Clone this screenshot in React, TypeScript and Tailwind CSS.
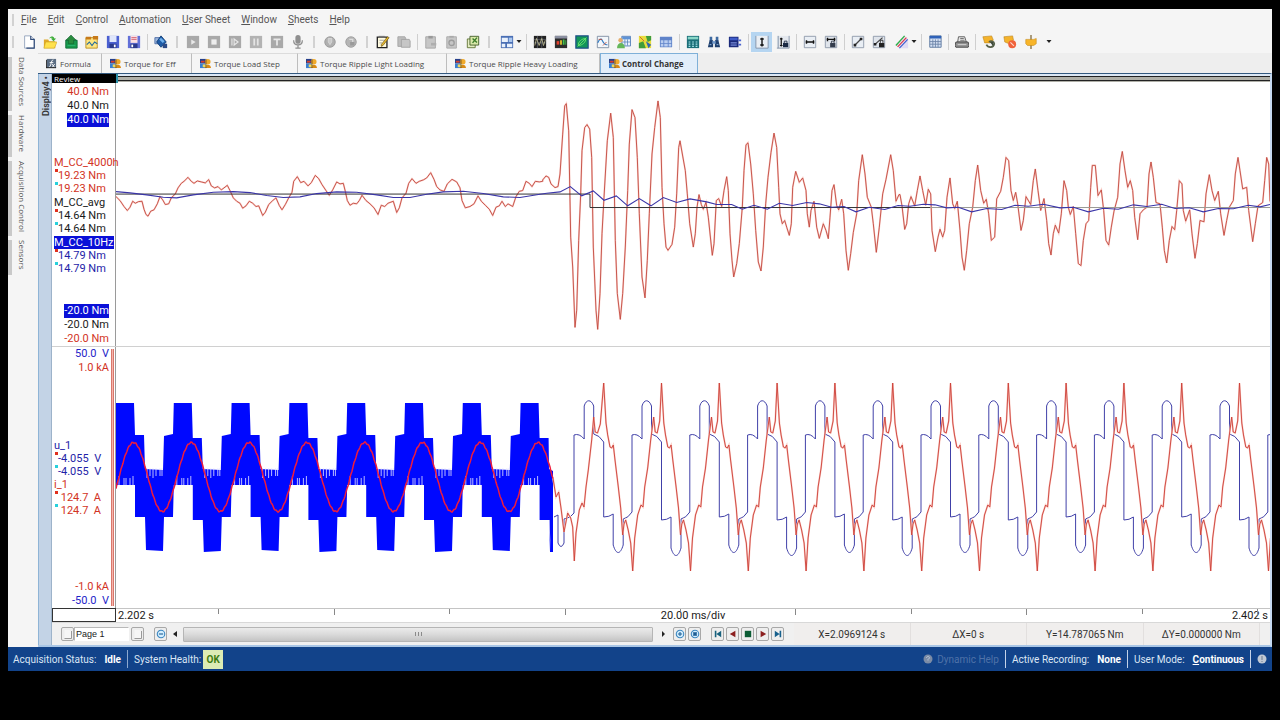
import React from "react";

type Point = [number, number];

/* ---------- Toolbar drawings, all on a 16 x 16 grid ---------- */

const glyphs: Record<string, React.ReactNode> = {
  newDoc: (
    <>
      <path d="M3 1h7l4 4v10H3z" fill="#fff" stroke="#8fa0ba" />
      <path d="M10 1v4h4v10H5" fill="none" stroke="#2f4a78" strokeWidth="1.300" />
    </>
  ),
  open: (
    <>
      <path d="M1 5h5l1 2h7v8H1z" fill="#e0a92a" />
      <path d="M3 8h13l-3 7H1z" fill="#ffe14d" stroke="#c9a21f" strokeWidth=".6" />
      <path d="M7 4c2-3 5-3 6 0h2l-3 3-3-3h2c-1-1-2-1-4 0z" fill="#3fae3a" />
    </>
  ),
  archive: (
    <>
      <path d="M2 6h13v9H2z" fill="#189a4c" stroke="#0c6b38" />
      <path d="M8 0l6 6h-3v4H5V6H2z" fill="#2a8b3e" stroke="#0b5a2e" strokeWidth=".6" />
      <path d="M4 12h9" stroke="#2db574" />
    </>
  ),
  picture: (
    <>
      <path d="M1 3h13v12H1z" fill="#ffe680" stroke="#b88a1c" />
      <path d="M1 2h6v3H1zM9 1h6v4H9z" fill="#c77a1a" />
      <path d="M2 11l3-3 3 4 3-4 3 2" fill="none" stroke="#2a6f9d" strokeWidth="1.3" />
    </>
  ),
  save: (
    <>
      <path d="M1 1h14v14H1z" fill="#4a5fd0" />
      <path d="M4 1h8v7H4z" fill="#dfe6fb" />
      <path d="M4 10h8v5H4z" fill="#2b3a8c" />
      <path d="M9 11h2v3H9z" fill="#fff" />
    </>
  ),
  saveAs: (
    <>
      <path d="M1 1h14v14H1z" fill="#6270d8" />
      <path d="M4 1h8v8H4z" fill="#fbdfe2" />
      <path d="M5 3h6M5 5h6" stroke="#d0566a" />
      <path d="M4 10h8v5H4z" fill="#2b3a8c" />
      <path d="M5 11h2v3H5z" fill="#fff" />
    </>
  ),
  cubes: (
    <>
      <path d="M1 3h8v7H1z" fill="#9db7dd" stroke="#4a6aa5" />
      <path d="M8 1l6 7-6 6-5-6z" fill="#1e5ca8" stroke="#0d3a75" />
      <path d="M8 3l4 4-2 2-4-4z" fill="#6fb0ec" />
      <path d="M10 10h5v5h-5z" fill="#2b4a86" />
    </>
  ),
  play: (
    <>
      <path d="M1 1h14v14H1z" fill="#a9a9a9" />
      <path d="M6 5l5 3-5 3z" fill="#e8e8e8" />
    </>
  ),
  stop: (
    <>
      <path d="M1 1h14v14H1z" fill="#a9a9a9" />
      <path d="M5 5h6v6H5z" fill="#eee" />
    </>
  ),
  step: (
    <>
      <path d="M1 1h14v14H1z" fill="#a9a9a9" />
      <path d="M4.500 4v8M7 4.500l4.500 3.500L7 11.500z" fill="none" stroke="#e8e8e8" strokeWidth="1.300" />
    </>
  ),
  pause: (
    <>
      <path d="M1 1h14v14H1z" fill="#b3b3b3" />
      <path d="M6 4v8M10 4v8" stroke="#e4e4e4" strokeWidth="2" />
    </>
  ),
  trigger: (
    <>
      <path d="M1 1h14v14H1z" fill="#a9a9a9" />
      <path d="M4 5h8M8 5v7" stroke="#e8e8e8" strokeWidth="2" />
    </>
  ),
  mic: (
    <>
      <rect x="5" y="0" width="6" height="10" rx="3" fill="#8f8f8f" />
      <path d="M3 6c0 7 10 7 10 0M8 11v4M5 15h6" fill="none" stroke="#8f8f8f" strokeWidth="1.400" />
    </>
  ),
  ringUp: (
    <>
      <circle cx="8" cy="8" r="6" fill="#b0b0b0" stroke="#989898" />
      <path d="M6 4h4v4l-2 3-2-3z" fill="#c9c9c9" stroke="#dedede" strokeWidth=".8" />
    </>
  ),
  ringLock: (
    <>
      <circle cx="8" cy="8" r="6" fill="#b5b5b5" stroke="#9c9c9c" />
      <path d="M7 8h5v4H7z" fill="#9a9a9a" />
      <path d="M6 5h4v3" stroke="#ddd" fill="none" strokeWidth="1.400" />
    </>
  ),
  note: (
    <>
      <path d="M1.500 2.500h11v12h-11z" fill="#fffbe0" stroke="#222" strokeWidth="1.500" />
      <path d="M3 1h7v2H3z" fill="#777" />
      <path d="M4 6h5M4 9h3" stroke="#999" />
      <path d="M15 3l-7 9-2 1 0-2 7-9z" fill="#e8b92c" stroke="#5a4510" strokeWidth=".7" />
    </>
  ),
  grayCopy: (
    <>
      <path d="M1 2h8l1 2v9H1z" fill="#bdbdbd" stroke="#a3a3a3" />
      <path d="M5 5h9l1 2v7H5z" fill="#c6c6c6" stroke="#a0a0a0" />
    </>
  ),
  grayPaste: (
    <>
      <path d="M2 2h11v13H2z" fill="#c6c6c6" stroke="#a3a3a3" />
      <path d="M5 1h5v3H5z" fill="#999" />
      <path d="M8 9h6v3H8z" fill="#aeaeae" />
    </>
  ),
  grayGear: (
    <>
      <path d="M2 2h11v13H2z" fill="#c6c6c6" stroke="#a8a8a8" />
      <path d="M5 1h5v2H5z" fill="#aaa" />
      <circle cx="7.500" cy="9" r="3" fill="none" stroke="#9c9c9c" strokeWidth="1.500" />
    </>
  ),
  sheetCopy: (
    <>
      <path d="M1.500 4.500h9v10h-9z" fill="#e5edc2" stroke="#5d7132" />
      <path d="M4.500 1.500h10v10h-10z" fill="#d8e8a8" stroke="#3f5a26" />
      <path d="M7.500 4l5 4.500M12.500 3l-5 6" stroke="#3b7c2a" strokeWidth="1.600" />
    </>
  ),
  layout: (
    <>
      <path d="M1 1h14v14H1z" fill="#4a6fb5" />
      <path d="M2 3h7v5H2zM2 10h4v4H2zM8 10h6v4H8z" fill="#e9f1fc" />
      <path d="M10 3h4v5h-4z" fill="#a9c6ee" />
    </>
  ),
  waveDark: (
    <>
      <path d="M1 1h14v14H1z" fill="#222" />
      <path d="M1 5h14M1 9h14M5 1v14M10 1v14" stroke="#6b7280" strokeWidth=".7" />
      <path d="M2 12l2-8 3 8 3-8 2 8 2-6" fill="none" stroke="#d7d3a2" strokeWidth=".8" />
    </>
  ),
  bars: (
    <>
      <path d="M1 1h14v14H1z" fill="#2c2c2c" />
      <path d="M1 1h14v3H1z" fill="#8a8fa0" />
      <path d="M3 7h3v4H3z" fill="#e3402d" />
      <path d="M7 6h2v5H7z" fill="#e8c92b" />
      <path d="M10 5h2v6h-2zM13 6h1v5h-1z" fill="#3fc24b" />
    </>
  ),
  xy: (
    <>
      <path d="M1 1h14v14H1z" fill="#12945a" stroke="#1c4f86" strokeWidth="1.400" />
      <path d="M4 12c-1-4 4-8 8-8 1 4-4 8-8 8zM3 13L13 3" fill="none" stroke="#6fe86f" />
    </>
  ),
  trend: (
    <>
      <path d="M1.500 1.500h13v13h-13z" fill="#f3f7fb" stroke="#7a8aa0" />
      <path d="M2 9c2-5 4-5 5-3s3 6 6 5" fill="none" stroke="#2f79c1" strokeWidth="1.300" />
      <path d="M3 5h4M8 12l4-4" stroke="#c0503a" />
    </>
  ),
  userTable: (
    <>
      <path d="M5.500 1.500h10v11h-10z" fill="#eaf2fb" stroke="#4a78b5" />
      <path d="M6 2h9v3H6z" fill="#5f93d6" />
      <path d="M9 5v7M12 5v7M6 8h9" stroke="#4a78b5" strokeWidth=".8" />
      <circle cx="4" cy="6" r="2.500" fill="#e3ad6c" />
      <path d="M0 15c0-8 9-8 9 0z" fill="#65b75a" />
    </>
  ),
  map: (
    <>
      <path d="M1 1h14v14H1z" fill="#e8dc3c" />
      <path d="M1 9l5-2 3 8H1zM9 1h6v5l-4 2z" fill="#3f9d3c" />
      <path d="M12 15l-3-8 6 4z" fill="#3167b3" />
      <path d="M2 2l5 5" stroke="#d4562c" />
    </>
  ),
  grid: (
    <>
      <path d="M1 2h14v12H1z" fill="#5f83c9" />
      <path d="M2 6h3v3H2zM6 6h4v3H6zM11 6h3v3h-3zM2 10h3v3H2zM6 10h4v3H6zM11 10h3v3h-3z" fill="#b9cdf0" />
    </>
  ),
  calc: (
    <>
      <path d="M1 1h14v14H1z" fill="#1b6e78" />
      <path d="M2 2h12v3H2z" fill="#88d6c7" />
      <path d="M3 8h2m2 0h2m2 0h2M3 10.500h2m2 0h2m2 0h2M3 13h2m2 0h2m2 0h2" stroke="#a4e3e8" strokeWidth="1.400" />
    </>
  ),
  binoculars: (
    <>
      <path d="M3 2h3v5H3zM10 2h3v5h-3z" fill="#3e6aa0" />
      <path d="M1 14l2-8h4v8zM9 14V6h4l2 8z" fill="#1f3f6d" />
      <path d="M6 7h4v3H6z" fill="#6f97c8" />
      <path d="M3 11h2M11 11h2" stroke="#9cc4ee" />
    </>
  ),
  device: (
    <>
      <path d="M1 2h11v12H1z" fill="#1b2a7a" />
      <path d="M2 3h9v3H2z" fill="#3f5cc8" />
      <path d="M3 9h7M3 11.500h7" stroke="#9fb4ff" />
      <path d="M12 5h3v2h-3zM12 10h3v2h-3z" fill="#4b64d0" />
    </>
  ),
  cursorV: (
    <>
      <path d="M1 1h14v14H1z" fill="#e9eef4" />
      <path d="M1 15V1M15 1v14H1" stroke="#7f8fa5" fill="none" />
      <path d="M8 3v10M6 4.500h4M6 11.500h4" stroke="#111" strokeWidth="1.600" />
    </>
  ),
  cursorVLock: (
    <>
      <path d="M1 1h14v14H1z" fill="#e4e8ee" />
      <path d="M2.500 1v14" stroke="#7f8fa5" />
      <path d="M6 3v10M4.500 4.500h3M4.500 12h3" stroke="#111" strokeWidth="1.400" />
      <path d="M8 9h6v5H8z" fill="#1b2a44" />
      <path d="M9.500 9V7h3v2" stroke="#1b2a44" fill="none" />
      <path d="M15 1v14H1" stroke="#7f8fa5" fill="none" />
    </>
  ),
  cursorH: (
    <>
      <path d="M1.500 1.500h13v13h-13z" fill="#e9eef4" stroke="#8b97a8" />
      <path d="M3 8h10M4 6v4M12 6v4" stroke="#111" strokeWidth="1.600" />
    </>
  ),
  cursorHLock: (
    <>
      <path d="M1.500 1.500h13v13h-13z" fill="#dfe4eb" stroke="#8b97a8" />
      <path d="M3 5h10M4 3v4M12 3v4" stroke="#111" strokeWidth="1.600" />
      <path d="M7 9h6v5H7z" fill="#333c4c" />
      <path d="M8.500 9V7h3v2" stroke="#333c4c" fill="none" />
    </>
  ),
  diagonal: (
    <>
      <path d="M1.500 1.500h13v13h-13z" fill="#e9eef4" stroke="#8b97a8" />
      <path d="M4 12l8-8" stroke="#444" strokeWidth="1.500" />
      <path d="M3 10h3v3H3zM10 3h3v3h-3z" fill="#222" />
    </>
  ),
  diagonalLock: (
    <>
      <path d="M1.500 1.500h13v13h-13z" fill="#dfe4eb" stroke="#8b97a8" />
      <path d="M3 11l9-8" stroke="#444" strokeWidth="1.500" />
      <path d="M2 9h3v3H2zM8 9h6v5H8z" fill="#222" />
      <path d="M9.500 9V6h3v3" stroke="#222" fill="none" />
    </>
  ),
  ruler: (
    <>
      <path d="M9 5h6v10H5z" fill="#e0dcf3" />
      <path d="M1 12L11 1l4 3L5 15z" fill="#f2dff0" />
      <path d="M1 12L11 1" stroke="#2fae4b" strokeWidth="1.600" />
      <path d="M3 13.500L13 3" stroke="#d23b4d" strokeWidth="1.400" />
      <path d="M5 15l9.500-10" stroke="#3c5fd0" strokeWidth="1.400" />
    </>
  ),
  tableBlue: (
    <>
      <path d="M2 1h13v13H2z" fill="#d5e1f3" stroke="#56729c" />
      <path d="M2 1h13v3H2z" fill="#2f62b8" />
      <path d="M5.500 5v9M8.500 5v9M11.500 5v9M2 7.500h13M2 10.500h13" stroke="#6b83a8" />
    </>
  ),
  printer: (
    <>
      <path d="M4 2h7l2 6H3z" fill="#e6e6e6" stroke="#555" />
      <path d="M1 8h14l1 4-1 2H1L0 12z" fill="#8f8f8f" stroke="#444" />
      <path d="M3 11h10" stroke="#ddd" />
      <path d="M6 4h4M6 6h5" stroke="#666" />
    </>
  ),
  tagCycle: (
    <>
      <path d="M1 2l10-1 2 5-4 3H3z" fill="#f4b32c" stroke="#b77d12" strokeWidth=".6" />
      <path d="M5 11c2 4 8 4 9-1 0-3-4-4-6-2" fill="none" stroke="#56604a" strokeWidth="2" />
      <path d="M9 8h4v5z" fill="#3e4a3c" />
    </>
  ),
  tagStop: (
    <>
      <path d="M1 2l10-1 1 5-5 4-5-2z" fill="#f4b32c" stroke="#b77d12" strokeWidth=".6" />
      <circle cx="10.500" cy="10.500" r="4.500" fill="#f0623c" />
      <path d="M8.500 8.500l4 4" stroke="#ffd9cb" strokeWidth="1.300" />
    </>
  ),
  tagPin: (
    <>
      <path d="M8 0v16" stroke="#7a6230" strokeWidth="1.400" />
      <path d="M2 5h9l3-1v6l-3 2H4l-2-2z" fill="#f8b52a" stroke="#c08512" strokeWidth=".6" />
    </>
  ),
};

function Glyph({ name }: { name: string }) {
  return (
    <svg viewBox="0 0 16 16" className="h-3.5 w-3.5 shrink-0" aria-hidden="true">
      {glyphs[name]}
    </svg>
  );
}

function Caret() {
  return (
    <svg viewBox="0 0 6 4" className="h-1 w-1.5 shrink-0" aria-hidden="true">
      <path d="M.5 0h5L3 3z" fill="#222" />
    </svg>
  );
}

/* "|" is a divider, ":" the grip of the next bar, "+" marks a drop-down, "*" a pressed button */
const toolbar: [string, string][] = [
  [":", ""], ["newDoc", "New"], ["open", "Open"], ["archive", "Archive"], ["picture", "Load layout"], ["save", "Save"], ["saveAs", "Save as"],
  ["|", ""], ["cubes", "Components"],
  [":", ""], ["play", "Start"], ["stop", "Stop"], ["step", "Single"], ["pause", "Pause"], ["trigger", "Trigger"], ["mic", "Voice mark"],
  [":", ""], ["ringUp", "Arm"], ["ringLock", "Lock"],
  [":", ""], ["note", "Edit notes"], ["grayCopy", "Copy"],
  ["|", ""], ["grayPaste", "Paste"], ["grayGear", "Paste special"], ["sheetCopy", "Copy to sheet"],
  [":", ""], ["layout+", "Layout"],
  ["|", ""], ["waveDark", "Waveform"], ["bars", "Meters"], ["xy", "XY view"], ["trend", "Trend"], ["userTable", "User table"], ["map", "Map"], ["grid", "Grid"],
  ["|", ""], ["calc", "Formula sheet"], ["binoculars", "Find"], ["device", "Device"],
  ["|", ""], ["cursorV*", "Vertical cursor"], ["cursorVLock", "Lock vertical cursor"],
  ["|", ""], ["cursorH", "Horizontal cursor"], ["cursorHLock", "Lock horizontal cursor"],
  ["|", ""], ["diagonal", "Slope cursor"], ["diagonalLock", "Lock slope cursor"], ["ruler+", "Measure"],
  ["|", ""], ["tableBlue", "Cursor table"],
  ["|", ""], ["printer", "Print"],
  ["|", ""], ["tagCycle", "Cycle marks"], ["tagStop", "Remove mark"], ["tagPin", "Add mark"],
];

function Toolbar() {
  return (
    <div className="-ml-px flex h-6 items-center" role="toolbar" aria-label="Main toolbar">
      {toolbar.map(([key, label], i) => {
        if (key === "|") return <span key={i} className="flex h-4 w-1.5 shrink-0 justify-center"><span className="w-px bg-[#cfcfcf]" /></span>;
        if (key === ":") return <span key={i} className="flex h-3 w-[11px] shrink-0 justify-center"><span className="w-0.5 bg-[#d2d2d2]" /></span>;
        const drop = key.endsWith("+");
        const pressed = key.endsWith("*");
        const cls = drop
          ? "flex h-5 w-[29px] shrink-0 items-center gap-0.5 pl-1.5"
          : pressed
            ? "flex h-5 w-[21px] shrink-0 items-center justify-center bg-[#b5d5f1]"
            : "flex h-5 w-[21px] shrink-0 items-center justify-center";
        return (
          <button key={i} type="button" aria-label={label} className={cls}>
            <Glyph name={key.replace(/[+*]/, "")} />
            {drop && <Caret />}
          </button>
        );
      })}
      <button type="button" aria-label="Toolbar options" className="flex h-5 w-4 items-center justify-center">
        <Caret />
      </button>
    </div>
  );
}

/* ---------- Sheet tabs ---------- */

function SheetIcon() {
  return (
    <svg viewBox="0 0 12 12" className="h-[11px] w-[11px] shrink-0" aria-hidden="true">
      <path d="M0 1h6v5H0z" fill="#27408b" />
      <path d="M0 6h6v5H0z" fill="#3b7fd0" />
      <path d="M1 3h4v2H1z" fill="#d7402c" />
      <circle cx="8.500" cy="4" r="3" fill="#f0a92a" />
      <path d="M5 11c0-5 7-5 7 0z" fill="#d98a16" />
      <path d="M3 7h4v3H3z" fill="#f4d65a" />
      <path d="M6.500 1v10" stroke="#3a2a12" strokeWidth=".7" />
    </svg>
  );
}

function FormulaIcon() {
  return (
    <svg viewBox="0 0 12 12" className="h-[11px] w-[11px] shrink-0" aria-hidden="true">
      <path d="M1 1h10v10H1z" fill="#5a6c82" />
      <path d="M3 10c3 0 2-8 5-8M4 5h4M6.500 6.500l3 4m0-4l-3 4" stroke="#fff" fill="none" />
      <path d="M.5 11V2M0 10.500h11" stroke="#222" />
    </svg>
  );
}

const tabs = [
  { label: "Formula", width: "w-[64px]" },
  { label: "Torque for Eff", width: "w-[90px]" },
  { label: "Torque Load Step", width: "w-[106px]" },
  { label: "Torque Ripple Light Loading", width: "w-[149px]" },
  { label: "Torque Ripple Heavy Loading", width: "w-[153px]" },
];

/* ---------- Trace data ---------- */

/* Samples are stored in thirds of a chart unit, relative to the segment's origin. */
function segment(x0: number, y0: number, flat: number[]): Point[] {
  const out: Point[] = [];
  for (let i = 0; i < flat.length; i += 2) out.push([x0 + flat[i] / 3, y0 + flat[i + 1] / 3]);
  return out;
}

const path = (pts: Point[]) => pts.map(([x, y], i) => `${i ? "L" : "M"}${x.toFixed(1)} ${y.toFixed(1)}`).join("");

const torque4000: Point[] = [
  ...segment(110, 150, [
    18, 138, 30, 150, 42, 168, 52, 180, 60, 170, 68, 152, 76, 158, 86, 153, 96, 152, 102, 176, 108, 192, 114, 197, 122, 182, 132, 178, 142, 160,
    150, 138, 158, 148, 166, 162, 176, 160, 184, 142, 196, 130, 204, 112, 214, 98, 222, 92, 234, 80, 244, 92, 252, 98, 262, 91, 274, 94, 286, 97,
    296, 87, 304, 106, 314, 112, 324, 108, 334, 118, 342, 112, 352, 104, 360, 120, 370, 142, 380, 152, 390, 158, 398, 173, 408, 166, 418, 152,
    428, 158, 438, 168, 446, 166, 458, 195, 466, 185, 476, 162, 488, 150, 498, 142, 508, 165, 516, 178, 526, 162, 536, 142, 546, 125, 551, 92,
    562, 78, 572, 96, 582, 92, 594, 106, 604, 96, 616, 74, 626, 84, 636, 102, 648, 120, 658, 134, 668, 118, 680, 94, 690, 100, 700, 98, 706, 122,
    712, 150, 720, 164, 730, 158, 740, 160, 748, 150, 756, 134, 768, 150, 780, 160, 792, 172, 804, 192, 814, 164, 824, 168, 834, 158, 850, 152,
    860, 186, 868, 172, 876, 142, 888, 128, 896, 98, 906, 84, 918, 98, 928, 92, 940, 88, 950, 82, 962, 66, 972, 86, 980, 108, 990, 118, 1002, 122,
    1012, 100, 1026, 86, 1040, 94, 1050, 112, 1056, 150, 1066, 172, 1080, 168, 1092, 160, 1104, 136, 1114, 152, 1126, 164, 1138, 176, 1148, 195,
    1158, 170, 1168, 166, 1176, 152, 1186, 168, 1194, 160, 1208, 168, 1218, 138, 1228, 122, 1238, 120, 1248, 92, 1258, 98, 1266, 108, 1276, 92,
    1288, 94, 1298, 92,
  ]),
  ...segment(540, 80, [
    8, 298, 18, 286, 26, 290, 33, 310, 45, 321, 54, 318, 60, 280, 68, 160, 74, 75, 79, 68, 86, 150, 92, 470, 98, 560, 105, 742, 110, 690, 116, 480,
    122, 340, 126, 210, 134, 140, 141, 131, 149, 145, 155, 230, 160, 500, 168, 690, 173, 748, 180, 640, 186, 460, 192, 350, 202, 180, 212, 97,
    220, 170, 226, 480, 232, 640, 241, 718, 248, 640, 256, 500, 263, 330, 268, 190, 276, 86, 285, 110, 292, 230, 298, 400, 306, 590, 315, 653,
    322, 540, 328, 400, 336, 220, 344, 140, 354, 60, 361, 110, 366, 320, 372, 430, 378, 500, 384, 510, 396, 492, 404, 440, 410, 340, 416, 200,
    420, 180, 428, 226, 436, 270, 442, 340, 449, 430, 460, 500, 466, 460, 471, 380, 477, 342, 484, 372, 490, 386, 498, 365, 505, 410, 517, 525,
    522, 490, 529, 360, 536, 354, 545, 378, 552, 330, 560, 288, 565, 330, 570, 460, 576, 540, 581, 590, 590, 550, 598, 490, 607, 380, 612, 270,
    618, 192, 624, 186, 632, 250, 640, 340, 647, 450, 655, 545, 663, 572, 670, 500, 677, 370, 684, 290, 693, 215, 702, 157, 710, 200, 716, 320,
    720, 400, 727, 430, 734, 420, 740, 440, 748, 465, 754, 430, 758, 320, 767, 272, 778, 305, 788, 292, 798, 330, 802, 400, 808, 440, 813, 390,
    822, 362, 830, 440, 838, 474, 850, 430, 858, 450, 865, 475, 870, 410, 876, 330, 882, 312, 890, 375, 896, 388, 905, 356, 911, 400, 918, 510,
    925, 570, 932, 520, 940, 456, 950, 400, 956, 300, 967, 222, 975, 280, 982, 350, 994, 380, 1000, 430, 1009, 516, 1018, 440, 1028, 340,
    1038, 296, 1052, 222, 1060, 270, 1068, 362, 1077, 342,
  ]),
  ...segment(900, 80, [
    0, 342, 6, 376, 14, 447, 20, 430, 26, 370, 33, 348, 44, 376, 52, 330, 60, 286, 68, 330, 77, 374, 85, 326, 92, 340, 96, 450, 106, 514, 114, 470,
    120, 446, 128, 470, 134, 450, 141, 350, 150, 292, 158, 370, 164, 384, 172, 362, 180, 450, 186, 530, 193, 570, 200, 510, 208, 430, 218, 380,
    226, 300, 233, 253, 242, 330, 251, 368, 259, 356, 266, 400, 274, 480, 284, 470, 290, 355, 302, 332, 310, 290, 318, 230, 326, 240, 333, 330,
    340, 360, 347, 335, 353, 370, 363, 450, 370, 420, 378, 348, 392, 372, 400, 300, 406, 265, 414, 330, 422, 390, 432, 354, 440, 420, 446, 490,
    453, 524, 460, 460, 466, 434, 476, 458, 484, 400, 492, 300, 500, 330, 505, 380, 511, 402, 520, 378, 527, 460, 535, 550, 543, 556, 550, 480,
    558, 430, 566, 420, 572, 320, 577, 254, 586, 254, 594, 345, 604, 328, 611, 390, 618, 480, 626, 494, 634, 440, 642, 392, 653, 350, 660, 250,
    667, 212, 675, 270, 683, 320, 691, 300, 698, 330, 704, 410, 713, 478, 720, 400, 730, 388, 741, 380, 747, 280, 753, 244, 760, 290, 768, 366,
    780, 370, 787, 440, 793, 510, 800, 548, 808, 480, 816, 438, 824, 448, 830, 390, 838, 300, 846, 310, 850, 390, 857, 422, 869, 388, 876, 460,
    885, 534, 892, 490, 900, 420, 912, 424, 918, 340, 928, 282, 936, 330, 944, 360, 955, 332, 962, 400, 972, 465, 980, 420, 988, 380, 1000, 360,
    1006, 280, 1014, 230, 1020, 270, 1028, 325, 1040, 320, 1046, 390, 1058, 484, 1066, 430, 1074, 376, 1088, 366, 1094, 300, 1100, 230, 1106, 250,
    1110, 362, 1113, 362,
  ]),
];

const torque10Hz: Point[] = [
  ...segment(110, 150, [
    18, 123, 60, 127, 110, 133, 160, 140, 200, 142, 250, 133, 310, 125, 370, 123, 420, 126, 470, 135, 520, 141, 570, 139, 620, 129, 680, 124,
    740, 125, 800, 133, 850, 141, 900, 141, 950, 131, 1000, 124, 1060, 122, 1120, 129, 1180, 139, 1230, 141, 1290, 131,
  ]),
  ...segment(540, 80, [
    20, 338, 60, 334, 91, 318, 125, 346, 160, 331, 192, 359, 229, 346, 263, 376, 298, 354, 333, 376, 370, 351, 410, 366, 450, 355, 500, 364, 530, 372,
    575, 372, 607, 386, 642, 374, 682, 386, 718, 368, 758, 375, 800, 366, 838, 370, 875, 380, 912, 378, 948, 394, 988, 380, 1034, 387, 1074, 375,
  ]),
  ...segment(900, 80, [
    30, 377, 70, 371, 105, 373, 140, 382, 175, 380, 215, 394, 260, 384, 305, 387, 345, 374, 385, 377, 430, 371, 480, 382, 520, 380, 565, 394,
    610, 383, 655, 386, 700, 373, 740, 378, 785, 371, 825, 384, 868, 382, 910, 394, 955, 384, 1000, 385, 1045, 374, 1080, 379, 1113, 371,
  ]),
];

const PERIOD = 57.8;

/* Envelope of the switched phase voltage: block tops on the way out, block bottoms on the way back. */
function switchedEnvelope(): string {
  const top: Point[] = [];
  const bottom: Point[] = [];
  for (let k = 0; k < 8; k++) {
    const x = 116 + k * PERIOD;
    const d = k % 2 ? 3 : 0;
    top.push([x, 403], [x + 18, 403], [x + 19, 435 + d], [x + 28, 435 + d]);
    bottom.push([x, 485], [x + 19, 485], [x + 19, 517 + d], [x + 29, 517 + d], [x + 30, 550 + d / 1.5]);
    if (k < 7) {
      top.push([x + 29, 469], [x + 47, 470], [x + 48, 436], [x + 57, 434]);
      bottom.push([x + 47, 551], [x + 48, 517], [x + 57, 517]);
    }
  }
  top.push([549, 469], [553, 471]);
  bottom.push([549, 520], [550, 552], [553, 552]);
  return path([...top, ...bottom.reverse()]) + "Z";
}

function combGaps(): string {
  let d = "";
  for (let k = 0; k < 8; k++) {
    const x = 116 + k * PERIOD;
    for (const dx of [3, 8, 10, 14, 17]) d += `M${(x + dx).toFixed(1)} 485v${dx % 2 ? -9 : -7}`;
    if (k < 7) for (const dx of [31, 34, 37, 40, 44, 46]) d += `M${(x + dx).toFixed(1)} 468v${dx % 2 ? 10 : 8}`;
  }
  return d;
}

function sineCurrent(): string {
  const pts: Point[] = [];
  for (let x = 116; x <= 553; x += 1) {
    pts.push([x, 477 - 34.5 * Math.cos(((x - 133.500) / PERIOD) * 2 * Math.PI) + Math.sin(x * 1.7) * 0.7]);
  }
  return path(pts);
}

function blockCurrent(): string {
  const pts: Point[] = [
    [553, 478], [556, 497], [558.7, 492], [561, 508], [564, 532], [567.7, 513], [570.7, 518], [572.7, 527], [574.3, 561], [576, 533], [579.3, 510],
    [582, 503], [584, 507], [586, 487], [588.3, 470], [591.7, 440], [593.7, 417], [595.2, 432], [597.5, 433], [600.3, 424],
  ];
  const cycle: Point[] = [
    [0, 383], [2.3, 423], [4, 435], [6.3, 447], [8, 448], [9.6, 445], [11.3, 460], [14.6, 487], [17, 508], [19, 535], [20.300, 524], [22, 520], [24.5, 530],
    [27, 543], [29, 571], [31, 538], [34, 515], [37.3, 505], [39.3, 507], [41, 487], [44, 468], [47, 440], [50, 417], [51.5, 432], [53.5, 433], [56, 421],
  ];
  for (let k = 0; k < 12; k++) for (const [dx, y] of cycle) if (603.7 + k * PERIOD + dx < 1272) pts.push([603.7 + k * PERIOD + dx, y]);
  return path(pts);
}

function sixStepVoltage(): string {
  let d = "M554 517L558 515V543Q561 550 564 543V519Q571 518 574 513";
  for (let k = 0; k < 13; k++) {
    const x = 574.2 + k * PERIOD;
    const o = k % 2 ? 3 : 0;
    const X = (n: number) => (x + n).toFixed(1);
    if (x > 1271) break;
    d += `V435Q${X(5)} 433 ${X(10)} 439V406C${X(12)} 399 ${X(17)} 399 ${X(19.500)} 406V434Q${X(25)} 435 ${X(29.500)} 442V${517 + o}Q${X(35)} ${517 + o} ${X(39)} ${514 + o}V${545 + o}C${X(42)} ${555 + o} ${X(46)} ${555 + o} ${X(49)} ${545 + o}V${519}Q${X(54)} 518 ${X(57.800)} 512`;
  }
  return d;
}

/* ---------- Signal legends ---------- */

function Reading({ children }: { children: React.ReactNode }) {
  return (
    <>
      <div className="flex h-[13px] pl-px">
        <span className="h-[3px] w-[3px] shrink-0 bg-[#e0301e]" />
        <span className="whitespace-pre">{children}</span>
      </div>
      <div className="flex h-[13px] pl-px">
        <span className="h-[3px] w-[3px] shrink-0 bg-[#28d0dc]" />
        <span className="whitespace-pre">{children}</span>
      </div>
    </>
  );
}

const limit = "h-3.5 leading-[14px]";

function TorqueLegend() {
  return (
    <div className="flex w-16 shrink-0 flex-col justify-between border-r border-[#9a9a9a] pt-0.5 text-[11px] leading-[13px] whitespace-nowrap">
      <div className="flex flex-col items-end pr-1.5">
        <span className={`${limit} text-[#d23324]`}>40.0 Nm</span>
        <span className={limit}>40.0 Nm</span>
        <span className="h-3.5 bg-[#0a10d8] leading-[14px] text-white">40.0 Nm</span>
      </div>
      <div className="flex flex-col gap-px pl-0.5">
        <div className="text-[#d23324]">M_CC_4000h<Reading>19.23 Nm</Reading></div>
        <div>M_CC_avg<Reading>14.64 Nm</Reading></div>
        <div className="text-[#1e23a8]">
          <span className="block w-max bg-[#0a10d8] text-white">M_CC_10Hz</span>
          <Reading>14.79 Nm</Reading>
        </div>
      </div>
      <div className="flex flex-col items-end pr-1.5">
        <span className="h-3.5 bg-[#0a10d8] leading-[14px] text-white">-20.0 Nm</span>
        <span className={limit}>-20.0 Nm</span>
        <span className={`${limit} text-[#d23324]`}>-20.0 Nm</span>
      </div>
    </div>
  );
}

function PhaseLegend() {
  return (
    <div className="flex w-16 shrink-0 border-r border-[#9a9a9a] text-[11px] leading-[13px] whitespace-nowrap">
      <div className="flex min-w-0 flex-1 flex-col justify-between">
        <div className="flex flex-col items-end whitespace-pre">
          <span className={`${limit} text-[#1e23c8]`}>50.0  V</span>
          <span className={`${limit} text-[#d23324]`}>1.0 kA</span>
        </div>
        <div className="pl-0.5">
          <div className="text-[#1e23a8]">u_1<Reading>-4.055  V</Reading></div>
          <div className="text-[#d23324]">i_1<Reading> 124.7  A</Reading></div>
        </div>
        <div className="flex flex-col items-end whitespace-pre">
          <span className={`${limit} text-[#d23324]`}>-1.0 kA</span>
          <span className={`${limit} text-[#1e23c8]`}>-50.0  V</span>
        </div>
      </div>
      <div className="my-0.5 mr-px ml-0.5 w-[3px] border-x border-[#d9776c] bg-[#f4b5ac]" />
    </div>
  );
}

/* ---------- Bottom controls ---------- */

const smallBtn = "flex h-3.5 w-[13px] shrink-0 items-center justify-center rounded-[2px] border border-[#a8a8a8] bg-[#eeeeee]";

function ZoomGlyph({ kind }: { kind: "out" | "in" | "fit" }) {
  return (
    <svg viewBox="0 0 12 12" className="h-2.5 w-2.5" aria-hidden="true">
      <circle cx="6" cy="6" r="4.500" fill="#d4efff" stroke="#3a86c0" strokeWidth="1.300" />
      <path d={kind === "out" ? "M3.500 6h5" : kind === "in" ? "M3.500 6h5M6 3.500v5" : "M3.500 6h5M6 3.500v5M4 4l4 4M8 4l-4 4"} stroke="#1d5c93" strokeWidth="1.300" />
    </svg>
  );
}

const transport: { label: string; d: string; fill: string }[] = [
  { label: "First", d: "M1 1h2v8H1zM9 1v8L3 5z", fill: "#17607c" },
  { label: "Back", d: "M8 1v8L1 5z", fill: "#8c2020" },
  { label: "Halt", d: "M1 1h8v8H1z", fill: "#0b5c34" },
  { label: "Forward", d: "M2 1v8l7-4z", fill: "#8c2020" },
  { label: "Last", d: "M7 1h2v8H7zM1 1v8l6-4z", fill: "#17608c" },
];

const readouts = ["X=2.0969124 s", "ΔX=0 s", "Y=14.787065 Nm", "ΔY=0.000000 Nm"];

function PageIcon() {
  return (
    <svg viewBox="0 0 8 10" className="h-2.5 w-2" aria-hidden="true">
      <path d="M.5 1h5L7.500 3v6.500H.5z" fill="#f6f6f6" />
      <path d="M7.500 2v7.500H.5" stroke="#999" fill="none" />
    </svg>
  );
}

function BottomBar() {
  return (
    <div className="flex h-[23px] shrink-0 items-center border-t border-[#d8d8d8] bg-[#f0f0f0] pr-2.5 pl-[9px]">
      <button type="button" aria-label="Previous page" className={smallBtn}><PageIcon /></button>
      <input aria-label="Page" defaultValue="Page 1" className="h-3.5 w-[55px] border border-[#b8b8b8] border-r-white border-b-white bg-white pl-px font-['Liberation_Sans',sans-serif] text-[9px] outline-none" />
      <button type="button" aria-label="Next page" className={`${smallBtn} ml-0.5`}><PageIcon /></button>
      <button type="button" aria-label="Zoom out" className={`${smallBtn} ml-2.5`}><ZoomGlyph kind="out" /></button>
      <button type="button" aria-label="Scroll left" className="flex h-3.5 w-4 shrink-0 items-center justify-center">
        <svg viewBox="0 0 4 6" className="h-1.5 w-1"><path d="M4 0v6L0 3z" fill="#222" /></svg>
      </button>
      <div className="flex h-[15px] min-w-0 flex-1 items-center justify-center gap-0.5 rounded-[1px] border border-[#b5b5b5] bg-linear-to-b from-[#ebebeb] via-[#dadada] to-[#c4c4c4]">
        <span className="h-1 w-px bg-[#8a8a8a]" />
        <span className="h-1 w-px bg-[#8a8a8a]" />
        <span className="h-1 w-px bg-[#8a8a8a]" />
      </div>
      <button type="button" aria-label="Scroll right" className="flex h-3.5 w-5 shrink-0 items-center justify-center">
        <svg viewBox="0 0 4 6" className="h-1.5 w-1"><path d="M1 0v6l3-3z" fill="#222" /></svg>
      </button>
      <div className="flex gap-0.5">
        <button type="button" aria-label="Zoom in" className={smallBtn}><ZoomGlyph kind="in" /></button>
        <button type="button" aria-label="Zoom to fit" className={smallBtn}><ZoomGlyph kind="fit" /></button>
      </div>
      <div className="ml-2.5 flex gap-0.5">
        {transport.map((t) => (
          <button key={t.label} type="button" aria-label={t.label} className={smallBtn}>
            <svg viewBox="0 0 10 10" className="h-2 w-2"><path d={t.d} fill={t.fill} /></svg>
          </button>
        ))}
      </div>
      <div className="ml-2.5 flex h-full w-[466px] shrink-0 bg-[#f0eeed] text-[10px]">
        {readouts.map((r) => (
          <span key={r} className="flex flex-1 items-center justify-center border-r border-[#e2dfde] whitespace-nowrap text-[#333]">{r}</span>
        ))}
      </div>
    </div>
  );
}

/* ---------- Window ---------- */

const menus = ["File", "Edit", "Control", "Automation", "User Sheet", "Window", "Sheets", "Help"];

const docks = [
  { label: "Data Sources", height: "h-[54px]" },
  { label: "Hardware", height: "h-[42px]" },
  { label: "Acquisition Control", height: "h-[75px]" },
  { label: "Sensors", height: "h-[35px]" },
];

export default function App() {
  return (
    <div className="flex h-screen min-h-[480px] flex-col bg-black pt-[9px] pr-2 pb-[49px] pl-2 font-['Roboto','Noto_Sans',sans-serif] text-[#1a1a1a]">
      <div className="flex min-h-0 flex-1 flex-col overflow-hidden bg-[#f5f5f5]">
        <header className="flex h-11 shrink-0 flex-col justify-between">
          <nav aria-label="Menu" className="flex h-[22px] items-center gap-[11px] pl-1 text-[10px] text-[#555]">
            <span className="-mr-1 h-3 w-0.5 bg-[#d2d2d2]" />
            {menus.map((m) => (
              <button key={m} type="button" className="leading-4">
                <span className="underline">{m[0]}</span>{m.slice(1)}
              </button>
            ))}
          </nav>
          <Toolbar />
        </header>

        <div className="flex min-h-0 flex-1">
          <aside className="flex w-[30px] shrink-0 flex-col gap-1 pt-1 font-['Open_Sans',sans-serif]">
            {docks.map((d) => (
              <button key={d.label} type="button" className={`${d.height} w-5 shrink-0 border-l-4 border-[#c9c9c9] pl-1 text-left text-[8px] leading-3 whitespace-nowrap text-[#555] [writing-mode:vertical-rl]`}>
                {d.label}
              </button>
            ))}
          </aside>

          <main className="flex min-w-0 flex-1 flex-col">
            <div className="flex h-5 shrink-0 items-stretch bg-[#eeeeee] font-['Open_Sans',sans-serif] text-[8px] text-[#4a4a4a]" role="tablist">
              {tabs.map((t, i) => (
                <button key={t.label} type="button" role="tab" aria-selected="false" className={`${t.width} flex shrink-0 items-center gap-[3px] border-t border-r border-t-[#dcdcdc] border-r-[#bdbdbd] bg-[#f5f5f5] pl-2 whitespace-nowrap`}>
                  {i === 0 ? <FormulaIcon /> : <SheetIcon />}
                  {t.label}
                </button>
              ))}
              <button type="button" role="tab" aria-selected="true" className="flex w-[98px] shrink-0 items-center gap-0.5 border border-b-0 border-[#7fb0d8] bg-[#e2eefa] pl-2 font-bold whitespace-nowrap text-[#333]">
                <SheetIcon />
                Control Change
              </button>
            </div>

            <div className="flex min-h-0 flex-1 border-t border-r-2 border-b-2 border-t-[#33597f] border-r-[#c5d9f1] border-b-[#a9c6e6]">
              <div className="flex w-3.5 shrink-0 items-start justify-end border-x border-l-[#8fb4d6] border-r-[#9db3ca] bg-[#c3d3e6] pt-0.5">
                <span className="rotate-180 text-[9px] leading-[10px] font-semibold text-[#333] [writing-mode:vertical-rl]">Display4 •</span>
              </div>

              <div className="flex min-w-0 flex-1 flex-col bg-white">
                <div className="flex h-[9px] shrink-0">
                  <div className="w-16 bg-black pl-0.5 font-['Open_Sans',sans-serif] text-[8px] leading-[9px] text-white">Review</div>
                  <div className="flex-1 border-l-2 border-[#2a90a8]">
                    <div className="h-0.5 bg-[#dce8f5]" />
                    <div className="h-[5px] border-y border-[#222] bg-[#b0b0a8]" />
                    <div className="h-px bg-[#b0b0a8]" />
                  </div>
                </div>

                <section className="flex min-h-0 flex-1 basis-[264px] border-b border-[#d0d0d0]">
                  <TorqueLegend />
                  <div className="relative min-w-0 flex-1">
                    <svg viewBox="116 82 1154 264" preserveAspectRatio="none" className="absolute inset-0 h-full w-full" role="img" aria-label="Torque traces">
                      <path d={path(torque4000)} fill="none" stroke="#fbd3ce" strokeWidth="1.800" />
                      <path d={path(torque4000)} fill="none" stroke="#c2493f" strokeWidth=".9" />
                      <path d="M116 193.500H590V207H930" fill="none" stroke="#333" />
                      <path d="M930 207H1271" fill="none" stroke="#9a9a94" />
                      <path d={path(torque10Hz)} fill="none" stroke="#3a35a8" strokeWidth="1.100" />
                    </svg>
                  </div>
                </section>

                <section className="flex min-h-0 flex-1 basis-[261px]">
                  <PhaseLegend />
                  <div className="relative min-w-0 flex-1">
                    <svg viewBox="116 347 1154 261" preserveAspectRatio="none" className="absolute inset-0 h-full w-full" role="img" aria-label="Phase voltage and current traces">
                      <path d={switchedEnvelope()} fill="#0008ff" />
                      <path d={combGaps()} stroke="#e8e8ff" strokeWidth=".8" />
                      <path d={sixStepVoltage()} fill="none" stroke="#4040a8" />
                      <path d={blockCurrent()} fill="none" stroke="#fbcbc4" strokeWidth="1.800" />
                      <path d={blockCurrent()} fill="none" stroke="#cc3f38" strokeWidth=".9" />
                      <path d={sineCurrent()} fill="none" stroke="#ee1c3c" strokeWidth="1.500" />
                    </svg>
                  </div>
                </section>

                <div className="flex h-3.5 shrink-0 text-[11px] leading-[14px]">
                  <div className="w-16 border border-[#333]" />
                  <div className="relative flex flex-1 items-center justify-between border-t border-[#c4c4c4] px-0.5">
                    <svg viewBox="0 0 1154 6" preserveAspectRatio="none" className="absolute top-0 left-0 h-1.5 w-full" aria-hidden="true">
                      <path d="M102.500 0v5M218.500 0v6M333.500 0v5M449.500 0v6M564.500 0v2M679.500 0v6M795.500 0v5M910.500 0v6M1026.500 0v5M1141.500 0v6" stroke="#888" />
                    </svg>
                    <span>2.202 s</span>
                    <span>20.00 ms/div</span>
                    <span>2.402 s</span>
                  </div>
                </div>

                <BottomBar />
              </div>
            </div>
          </main>
        </div>

        <footer className="flex h-6 shrink-0 items-center bg-[#12438a] px-[5px] text-[10px] whitespace-nowrap text-[#dbe6f5]">
          <span>Acquisition Status:</span>
          <b className="ml-2 text-white">Idle</b>
          <span className="mx-1.5 h-[18px] w-px bg-[#8ea9d0]" />
          <span>System Health:</span>
          <b className="ml-0.5 flex h-[19px] w-5 items-center justify-center bg-[#dcecb4] text-[#3f7d12]">OK</b>
          <span className="ml-auto flex items-center gap-1 text-[#4f72a8]">
            <svg viewBox="0 0 10 10" className="h-2.5 w-2.5" aria-hidden="true"><circle cx="5" cy="5" r="4.500" fill="#7c8ca6" /><path d="M3.500 4c0-2 3-2 3 0L5 5.500v1" stroke="#b9c5d8" fill="none" /></svg>
            Dynamic Help
          </span>
          <span className="mx-1.5 h-[18px] w-px bg-[#c4d2e8]" />
          <span>Active Recording:</span>
          <b className="ml-2 text-white">None</b>
          <span className="mx-1.5 h-[18px] w-px bg-[#c4d2e8]" />
          <span>User Mode:</span>
          <b className="ml-2 text-white"><span className="underline">C</span>ontinuous</b>
          <span className="mx-1.5 h-[18px] w-px bg-[#c4d2e8]" />
          <svg viewBox="0 0 10 10" className="h-2.5 w-2.5" aria-label="Notices"><circle cx="5" cy="5" r="4.500" fill="#c0c8d4" /><path d="M5 2v4M5 7v1" stroke="#6d7a90" /></svg>
        </footer>
      </div>
    </div>
  );
}
